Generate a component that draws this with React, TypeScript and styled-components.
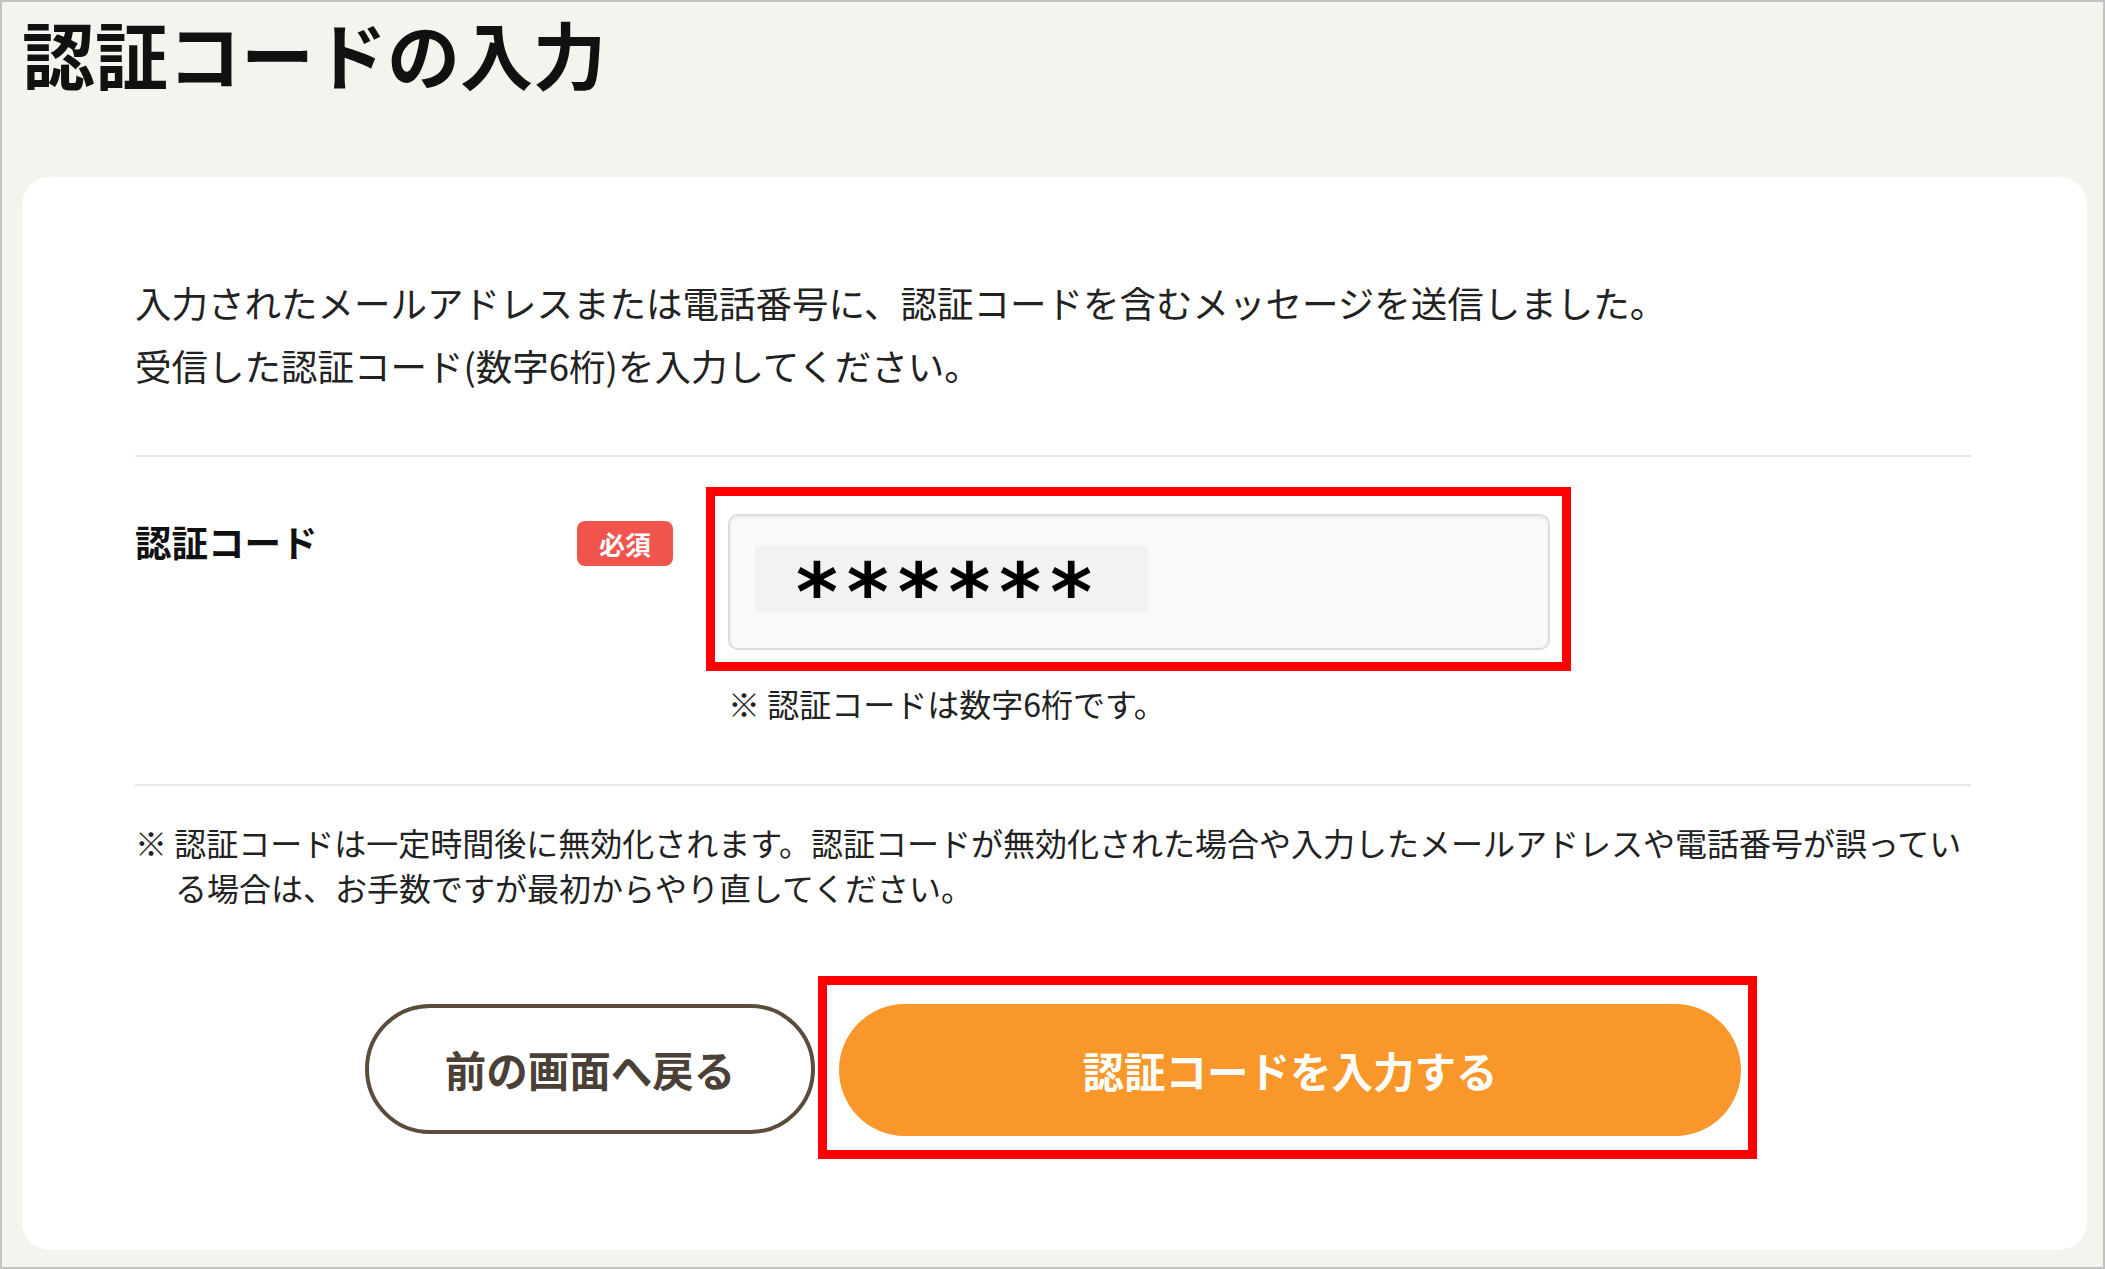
import { FC } from "react";
import styled, { createGlobalStyle } from "styled-components";

const GlobalStyle = createGlobalStyle`
  html, body {
    margin: 0;
    padding: 0;
  }
  body {
    font-family: "Noto Sans CJK JP", "Noto Sans", sans-serif;
    color: #222;
  }
`;

const Page = styled.div`
  box-sizing: border-box;
  width: 2105px;
  height: 1269px;
  border: 2px solid #c2c2c2;
  background: #f4f4ef;
  padding: 0 16px 17px 20px;
  display: flex;
  flex-direction: column;
`;

const Title = styled.h1`
  margin: 14px 0 0 0;
  font-size: 73px;
  line-height: 73px;
  font-weight: 700;
  color: #111;
`;

const Card = styled.main`
  flex: 1;
  margin-top: 88px;
  background: #fff;
  border-radius: 28px;
  padding: 94px 116px 0 113px;
`;

const Intro = styled.p`
  margin: 0;
  font-size: 36.5px;
  line-height: 63px;
`;

const Divider = styled.hr<{ $gap: number }>`
  margin: ${(p) => p.$gap}px 0 0;
  border: none;
  height: 2px;
  background: #e7e7e7;
`;

const FormRow = styled.div`
  display: flex;
  align-items: flex-start;
  padding: 57px 0 58px;
`;

const LabelCol = styled.div`
  width: 538px;
  display: flex;
  justify-content: space-between;
  align-items: flex-start;
`;

const Label = styled.label`
  font-size: 36.5px;
  line-height: 56px;
  font-weight: 700;
  color: #111;
`;

const Badge = styled.span`
  margin-top: 7px;
  width: 96px;
  height: 45px;
  border-radius: 8px;
  background: #f0544c;
  color: #fff;
  font-size: 26px;
  font-weight: 700;
  display: flex;
  align-items: center;
  justify-content: center;
`;

const FieldCol = styled.div`
  margin-left: 55px;
`;

/* red annotation frame drawn over the content */
const Annotated = styled.div<{ $t: number; $r: number; $b: number; $l: number }>`
  position: relative;
  &::after {
    content: "";
    position: absolute;
    top: -${(p) => p.$t}px;
    right: -${(p) => p.$r}px;
    bottom: -${(p) => p.$b}px;
    left: -${(p) => p.$l}px;
    border: 9px solid #ff0000;
    pointer-events: none;
  }
`;

const Field = styled.div`
  box-sizing: border-box;
  width: 822px;
  height: 136px;
  border: 2px solid #dcdcdc;
  border-radius: 10px;
  background: #f9f9f9;
  box-shadow: inset 0 2px 4px rgba(0, 0, 0, 0.06);
  padding: 30px 0 0 25px;
`;

const CodeValue = styled.span`
  display: block;
  box-sizing: border-box;
  width: 393px;
  height: 66px;
  background: #f2f2f2;
  padding: 14px 0 0 41px;
  font-family: "DejaVu Sans", sans-serif;
  font-weight: 700;
  font-size: 80px;
  line-height: 66px;
  letter-spacing: 9px;
  color: #000;
  white-space: nowrap;
`;

const Hint = styled.p`
  margin: 30px 0 0;
  font-size: 32px;
  line-height: 46px;
`;

const Note = styled.p`
  margin: 34px 0 0;
  font-size: 32px;
  line-height: 45px;
  padding-left: 40px;
  text-indent: -40px;
  white-space: nowrap;
`;

const ButtonRow = styled.div`
  margin-top: 94px;
  display: flex;
  justify-content: center;
  align-items: flex-start;
  gap: 24px;
`;

const PillButton = styled.button<{ $primary?: boolean }>`
  box-sizing: border-box;
  display: block;
  width: ${(p) => (p.$primary ? 902 : 450)}px;
  height: ${(p) => (p.$primary ? 132 : 130)}px;
  border-radius: 70px;
  border: ${(p) => (p.$primary ? "none" : "4px solid #5b4d3b")};
  background: ${(p) => (p.$primary ? "#f9972a" : "#fff")};
  color: ${(p) => (p.$primary ? "#fff" : "#4a4036")};
  font-family: inherit;
  font-size: 41.5px;
  font-weight: 700;
  padding: 0;
  cursor: pointer;
`;

const App: FC = () => {
  return (
    <>
      <GlobalStyle />
      <Page>
        <Title>認証コードの入力</Title>
        <Card>
          <Intro>
            入力されたメールアドレスまたは電話番号に、認証コードを含むメッセージを送信しました。
            <br />
            受信した認証コード(数字6桁)を入力してください。
          </Intro>
          <Divider $gap={58} />
          <FormRow>
            <LabelCol>
              <Label>認証コード</Label>
              <Badge>必須</Badge>
            </LabelCol>
            <FieldCol>
              <Annotated $t={27} $r={21} $b={21} $l={22}>
                <Field>
                  <CodeValue>******</CodeValue>
                </Field>
              </Annotated>
              <Hint>※ 認証コードは数字6桁です。</Hint>
            </FieldCol>
          </FormRow>
          <Divider $gap={0} />
          <Note>
            ※ 認証コードは一定時間後に無効化されます。認証コードが無効化された場合や入力したメールアドレスや電話番号が誤ってい
            <br />
            る場合は、お手数ですが最初からやり直してください。
          </Note>
          <ButtonRow>
            <PillButton>前の画面へ戻る</PillButton>
            <Annotated $t={28} $r={16} $b={23} $l={21}>
              <PillButton $primary>認証コードを入力する</PillButton>
            </Annotated>
          </ButtonRow>
        </Card>
      </Page>
    </>
  );
};

export default App;
